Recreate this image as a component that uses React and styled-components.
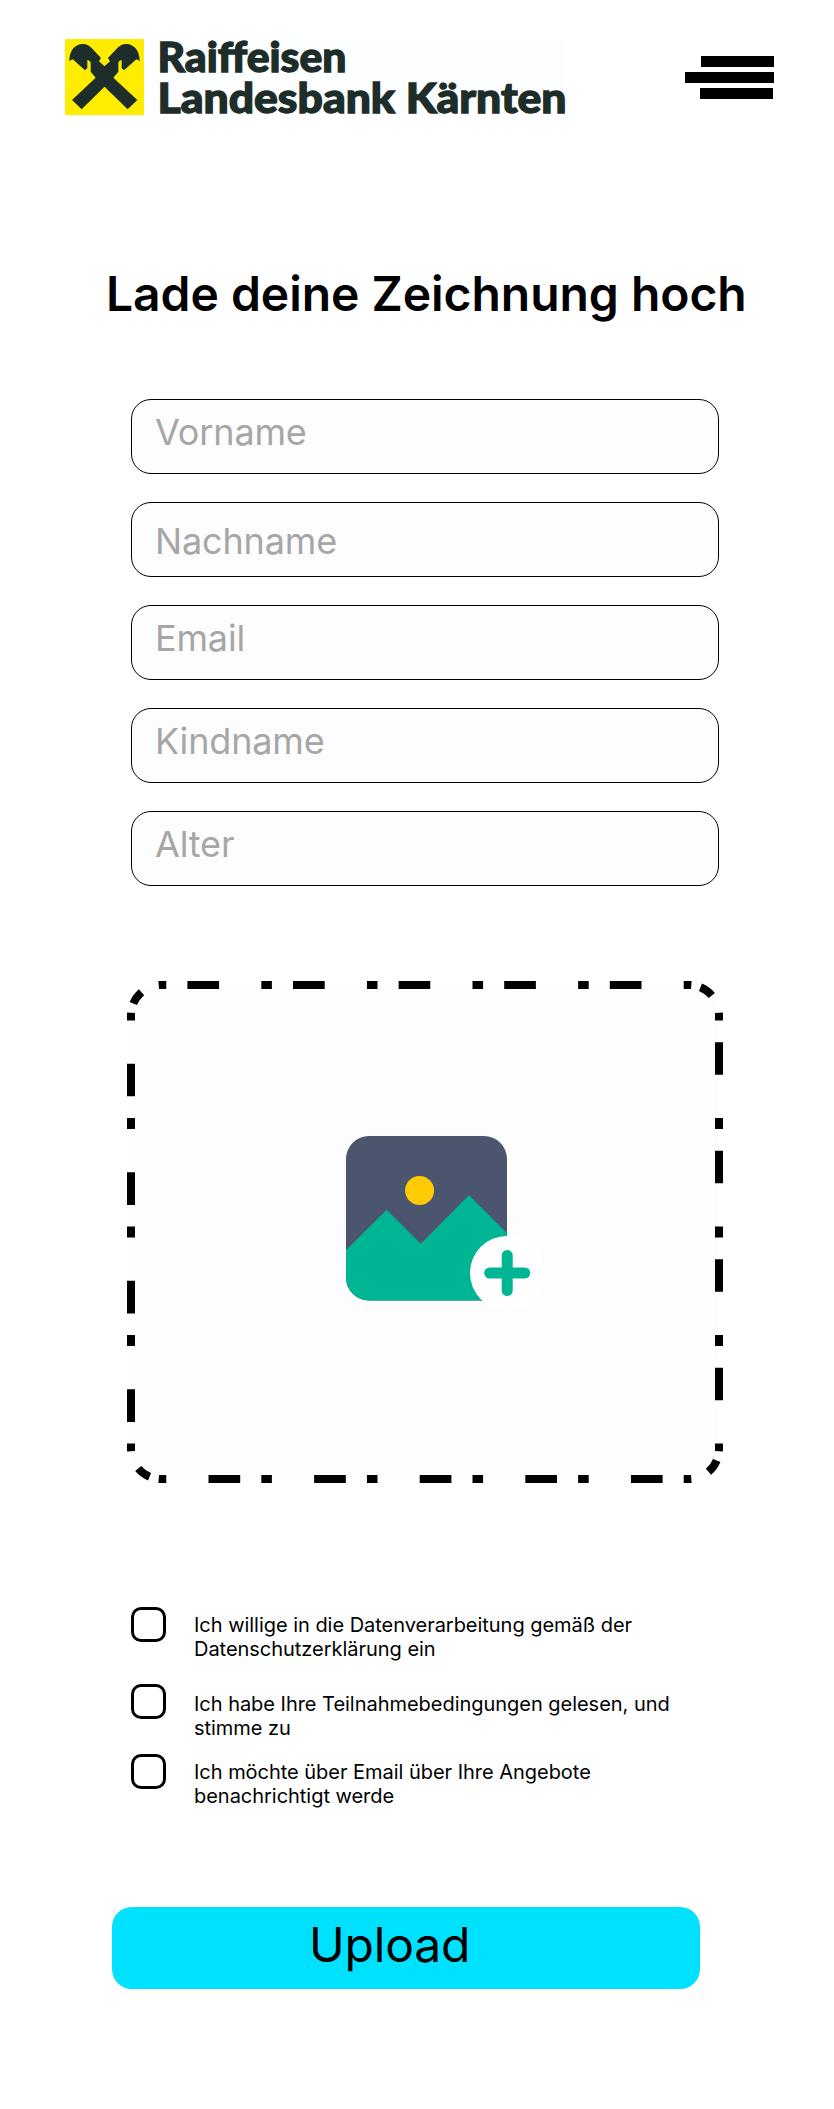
import React from "react";
import styled, { createGlobalStyle } from "styled-components";

const GlobalStyle = createGlobalStyle`
  *, *::before, *::after { box-sizing: border-box; }
  body {
    margin: 0;
    background: #fff;
    color: #000;
    font-family: Inter, "Liberation Sans", sans-serif;
  }
`;

const Page = styled.div`
  width: 834px;
  height: 2109px;
  display: flex;
  flex-direction: column;
  overflow: hidden;
`;

const Header = styled.header`
  display: flex;
  justify-content: space-between;
  align-items: flex-start;
  padding: 39px 60px 0 65px;
`;

const Brand = styled.div`
  display: flex;
  width: 500px;
  height: 76px;
  background: #fdfeff;
`;

const BrandMark = styled.svg`
  flex: none;
  width: 79px;
  height: 76px;
`;

const BrandName = styled.svg`
  flex: none;
  width: 421px;
  height: 76px;
  overflow: visible;
  fill: #1d2d29;
  stroke: #1d2d29;
  stroke-width: 1.3;
  font: 900 42.5px Lato, "Liberation Sans", sans-serif;
`;

const MenuButton = styled.button`
  display: flex;
  flex-direction: column;
  gap: 5px;
  width: 89px;
  margin-top: 17px;
  padding: 0;
  border: 0;
  background: none;
`;

const MenuBar = styled.span`
  width: ${(p) => p.$width}px;
  height: 11px;
  margin-left: ${(p) => p.$indent || 0}px;
  background: #000;
`;

const Title = styled.h1`
  margin: 150px 0 0 106px;
  font-size: 48px;
  font-weight: 600;
  line-height: 58px;
  letter-spacing: -0.04px;
  white-space: nowrap;
`;

const Form = styled.form`
  display: flex;
  flex-direction: column;
  width: 588px;
  margin: 76px 0 0 131px;
`;

const Fields = styled.div`
  display: flex;
  flex-direction: column;
  gap: 28px;
`;

const Field = styled.input`
  width: 588px;
  height: 75px;
  padding: ${(p) => (p.$low ? "2px 23px 0" : "0 23px 10px")};
  border: 1px solid #000;
  border-radius: 20px;
  background: #fdfdfd;
  font: 400 36px Inter, "Liberation Sans", sans-serif;
  letter-spacing: -0.15px;
  outline: none;

  &::placeholder {
    color: #a6a6a6;
    opacity: 1;
  }
`;

const DropZone = styled.label`
  display: block;
  width: 588px;
  height: 494px;
  margin-top: 99px;
`;

const DropArt = styled.svg`
  display: block;
  width: 588px;
  height: 494px;
  overflow: visible;
`;

const Consents = styled.div`
  display: flex;
  flex-direction: column;
  margin-top: 128px;
`;

const Consent = styled.label`
  display: flex;
  align-items: flex-start;
  gap: 28px;
  height: ${(p) => p.$height}px;
`;

const Checkbox = styled.input`
  appearance: none;
  flex: none;
  width: 35px;
  height: 35px;
  margin: 0;
  border: 3px solid #000;
  border-radius: 10px;
  background: #fff;
`;

const ConsentText = styled.span`
  padding-top: ${(p) => p.$drop}px;
  font-size: 20px;
  line-height: 24px;
  letter-spacing: -0.03px;
  white-space: nowrap;
`;

const UploadButton = styled.button`
  width: 588px;
  height: 82px;
  margin: 83px 0 0 -19px;
  padding: 0 0 6px 197px;
  border: 0;
  border-radius: 20px;
  background: #00e1ff;
  color: #000;
  font: 400 48px/58px Inter, "Liberation Sans", sans-serif;
  letter-spacing: -0.2px;
  text-align: left;
`;

const fields = [
  { label: "Vorname" },
  { label: "Nachname", low: true },
  { label: "Email" },
  { label: "Kindname" },
  { label: "Alter" },
];

const consents = [
  { lines: ["Ich willige in die Datenverarbeitung gemäß der", "Datenschutzerklärung ein"], height: 77, drop: 6 },
  { lines: ["Ich habe Ihre Teilnahmebedingungen gelesen, und", "stimme zu"], height: 70, drop: 8 },
  { lines: ["Ich möchte über Email über Ihre Angebote", "benachrichtigt werde"], height: 70, drop: 6 },
];

// Each side and corner carries its own whole number of dash periods (100 units each).
const edges = [
  { d: "M30 0H558", periods: 5 },
  { d: "M558 0A30 30 0 0 1 588 30", periods: 1 },
  { d: "M588 30V464", periods: 4 },
  { d: "M588 464A30 30 0 0 1 558 494", periods: 1 },
  { d: "M558 494H30", periods: 5 },
  { d: "M30 494A30 30 0 0 1 0 464", periods: 1 },
  { d: "M0 464V30", periods: 4 },
  { d: "M0 30A30 30 0 0 1 30 0", periods: 1 },
];

function Logo() {
  return (
    <Brand>
      <BrandMark viewBox="45 27 237 228" preserveAspectRatio="none">
        <rect x="45" y="27" width="237" height="228" fill="#ffed00" />
        <path
          fill="#1d2d29"
          d="M58 93C58 62 75 42 98 42C110 42 119 47 127 56L153 84L147 94L163.500 109L180 94L174 84L200 56C208 47 217 42 229 42C252 42 269 62 269 93L259 88L222 121L215 114V90C208 91 205 95 205 101V125L190 143L262 210L233 238L163.500 170L95 238L66 210L137 143L122 125V101C122 95 119 91 112 90V114L105 121L68 88Z"
        />
      </BrandMark>
      <BrandName viewBox="0 0 421 76">
        <text x="13.500" y="32.500" textLength="189" lengthAdjust="spacingAndGlyphs">Raiffeisen</text>
        <text x="13.500" y="73.500" textLength="409" lengthAdjust="spacingAndGlyphs">Landesbank Kärnten</text>
      </BrandName>
    </Brand>
  );
}

function UploadArt() {
  return (
    <DropArt viewBox="0 0 588 494">
      <rect width="588" height="494" rx="30" fill="#fdfdfd" />
      {edges.map((e) => (
        <path
          key={e.d}
          d={e.d}
          pathLength={e.periods * 100}
          fill="none"
          stroke="#000"
          strokeWidth="8"
          strokeDasharray="10 20 30 40"
          strokeDashoffset="5"
        />
      ))}
      <clipPath id="photo">
        <rect x="215" y="151" width="161" height="164.600" rx="23" />
      </clipPath>
      <g clipPath="url(#photo)">
        <rect x="215" y="151" width="161" height="165" fill="#4b566e" />
        <path d="M215 265.300L255.700 224.700L289.700 258.700L338 210.300L376 248.300V316H215Z" fill="#00b594" />
      </g>
      <circle cx="288.600" cy="205.500" r="14.500" fill="#ffcc03" />
      <circle cx="376" cy="288" r="37" fill="#fff" />
      <path d="M376.200 270.500V305.500M358.700 288H393.700" stroke="#00b594" strokeWidth="11" strokeLinecap="round" />
    </DropArt>
  );
}

export default function App() {
  return (
    <>
      <GlobalStyle />
      <Page>
        <Header>
          <Logo />
          <MenuButton aria-label="Menü">
            <MenuBar $width={73} $indent={16} />
            <MenuBar $width={89} />
            <MenuBar $width={73} $indent={15} />
          </MenuButton>
        </Header>
        <Title>Lade deine Zeichnung hoch</Title>
        <Form>
          <Fields>
            {fields.map((f) => (
              <Field key={f.label} placeholder={f.label} $low={f.low} />
            ))}
          </Fields>
          <DropZone>
            <UploadArt />
          </DropZone>
          <Consents>
            {consents.map((c) => (
              <Consent key={c.lines[0]} $height={c.height}>
                <Checkbox type="checkbox" />
                <ConsentText $drop={c.drop}>
                  {c.lines[0]}
                  <br />
                  {c.lines[1]}
                </ConsentText>
              </Consent>
            ))}
          </Consents>
          <UploadButton type="button">Upload</UploadButton>
        </Form>
      </Page>
    </>
  );
}
